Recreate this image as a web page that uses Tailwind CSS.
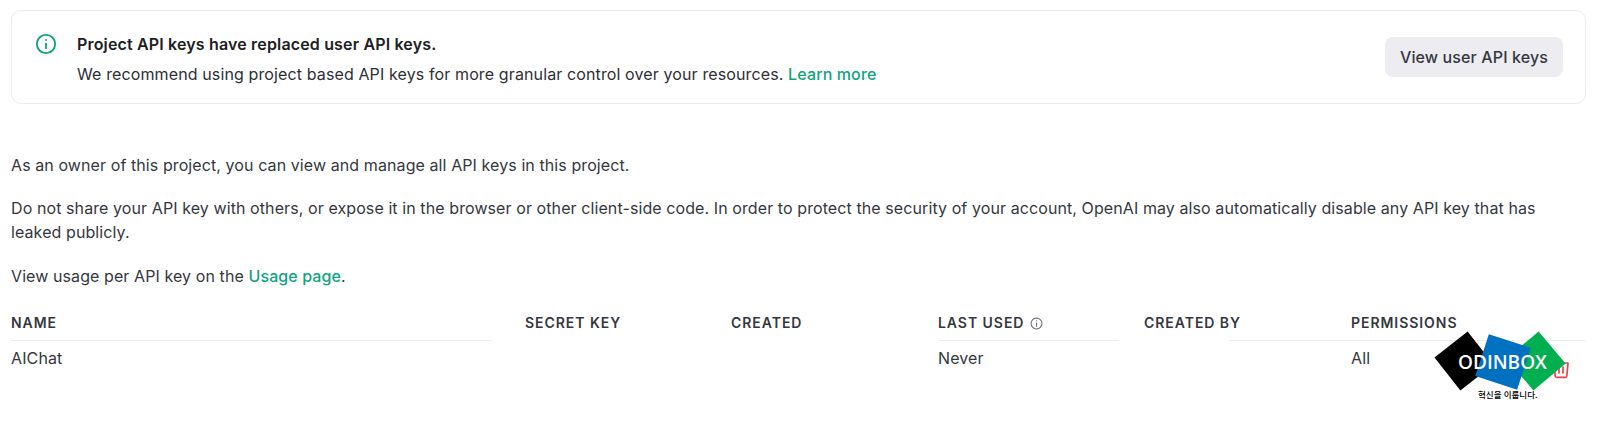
<!DOCTYPE html>
<html lang="en">
<head>
    <meta charset="UTF-8">
    <title>API keys</title>
    <script src="https://cdn.jsdelivr.net/npm/@tailwindcss/browser@4"></script>
</head>
<body class="bg-white font-['Inter','Noto_Sans_CJK_KR',sans-serif] text-[16px] tracking-[0.12px] text-[#353740]">
    <div class="relative w-[1597px] h-[426px] overflow-hidden px-[11px] pt-[10px]">
        <!-- banner -->
        <div class="w-[1575px] h-[94px] border border-[#ececf1] rounded-[10px] flex items-center justify-between pl-[24px] pr-[22px]">
            <div class="flex items-start">
                <svg class="w-[22px] h-[22px] mt-[4px] -ml-[1px] text-[#10a37f]" viewBox="0 0 24 24" fill="none" stroke="currentColor" stroke-width="2" stroke-linecap="round">
                    <circle cx="12" cy="12" r="10"/>
                    <path d="M12 11.500v5"/>
                    <path d="M12 7.600v.1"/>
                </svg>
                <div class="ml-[20px] pt-[3px]">
                    <div class="font-semibold text-[#202123] tracking-[0.16px] leading-[24px]">Project API keys have replaced user API keys.</div>
                    <div class="leading-[24px] mt-[6px] text-[#2e2f36]">We recommend using project based API keys for more granular control over your resources. <a class="text-[#10a37f] font-medium">Learn more</a></div>
                </div>
            </div>
            <button class="w-[178px] h-[40px] rounded-[8px] bg-[#ececf1] font-medium text-[#353740]">View user API keys</button>
        </div>

        <!-- description -->
        <p class="mt-[49px] leading-[24px] tracking-[0.09px]">As an owner of this project, you can view and manage all API keys in this project.</p>
        <p class="mt-[19px] leading-[24px] tracking-[0.09px]">Do not share your API key with others, or expose it in the browser or other client-side code. In order to protect the security of your account, OpenAI may also automatically disable any API key that has leaked publicly.</p>
        <p class="mt-[20px] leading-[24px] tracking-[0.09px]">View usage per API key on the <a class="text-[#10a37f] font-medium">Usage page</a>.</p>

        <!-- table -->
        <div class="mt-[22px] grid grid-cols-[514px_206px_207px_206px_207px_235px] text-[14px] font-semibold tracking-[0.95px] leading-[20px]">
            <div class="h-[33px] pt-[3px]">NAME<div class="mt-[7px] w-[481px] h-px bg-[#ececf1]"></div></div>
            <div class="h-[33px] pt-[3px]">SECRET KEY</div>
            <div class="h-[33px] pt-[3px]">CREATED</div>
            <div class="h-[33px] pt-[3px]">
                <div class="flex items-center gap-[6px]">LAST USED
                    <svg class="w-[13px] h-[13px] text-[#6e6e80]" viewBox="0 0 24 24" fill="none" stroke="currentColor" stroke-width="2" stroke-linecap="round">
                        <circle cx="12" cy="12" r="10"/>
                        <path d="M12 11v6"/>
                        <path d="M12 7v.1"/>
                    </svg>
                </div>
                <div class="mt-[7px] w-[181px] h-px bg-[#ececf1]"></div>
            </div>
            <div class="h-[33px] pt-[3px]">CREATED BY<div class="mt-[7px] ml-[85px] w-[122px] h-px bg-[#ececf1]"></div></div>
            <div class="h-[33px] pt-[3px]">PERMISSIONS<div class="mt-[7px] w-[235px] h-px bg-[#ececf1]"></div></div>
        </div>
        <div class="grid grid-cols-[514px_206px_207px_206px_207px_235px] mt-[5px] leading-[20px]">
            <div>AIChat</div>
            <div></div>
            <div></div>
            <div>Never</div>
            <div></div>
            <div>All</div>
        </div>

        <!-- delete icon, mostly under the watermark -->
        <svg class="absolute left-[1552px] top-[359px] w-[18px] h-[20px] text-[#ef4146]" viewBox="0 0 18 20" fill="none" stroke="currentColor" stroke-width="1.700" stroke-linecap="round" stroke-linejoin="round">
            <path d="M2 4h14l-1.200 13a1.500 1.500 0 0 1-1.500 1.300H4.700a1.500 1.500 0 0 1-1.500-1.300z"/>
            <path d="M7 8v6M11 8v6"/>
        </svg>

        <!-- watermark -->
        <div class="absolute left-[1430px] top-[328px] w-[167px] h-[76px]">
            <div class="absolute left-[13px] top-[12px] w-[42px] h-[42px] bg-black rotate-[52deg]"></div>
            <div class="absolute left-[85px] top-[12px] w-[42px] h-[42px] bg-[#00b050] rotate-[50deg]"></div>
            <div class="absolute left-[51px] top-[12px] w-[44px] h-[44px] bg-[#0070c0] rotate-[18deg]"></div>
            <div class="absolute left-[27px] top-[22px] w-[91px] text-center font-['Open_Sans',sans-serif] text-[19px] tracking-normal leading-[24px] font-semibold text-white whitespace-nowrap">ODINBOX</div>
            <div class="absolute left-[48px] top-[61px] text-[8.500px] tracking-normal leading-[12px] font-medium text-black whitespace-nowrap">혁신을 이룹니다.</div>
        </div>
    </div>
</body>
</html>
